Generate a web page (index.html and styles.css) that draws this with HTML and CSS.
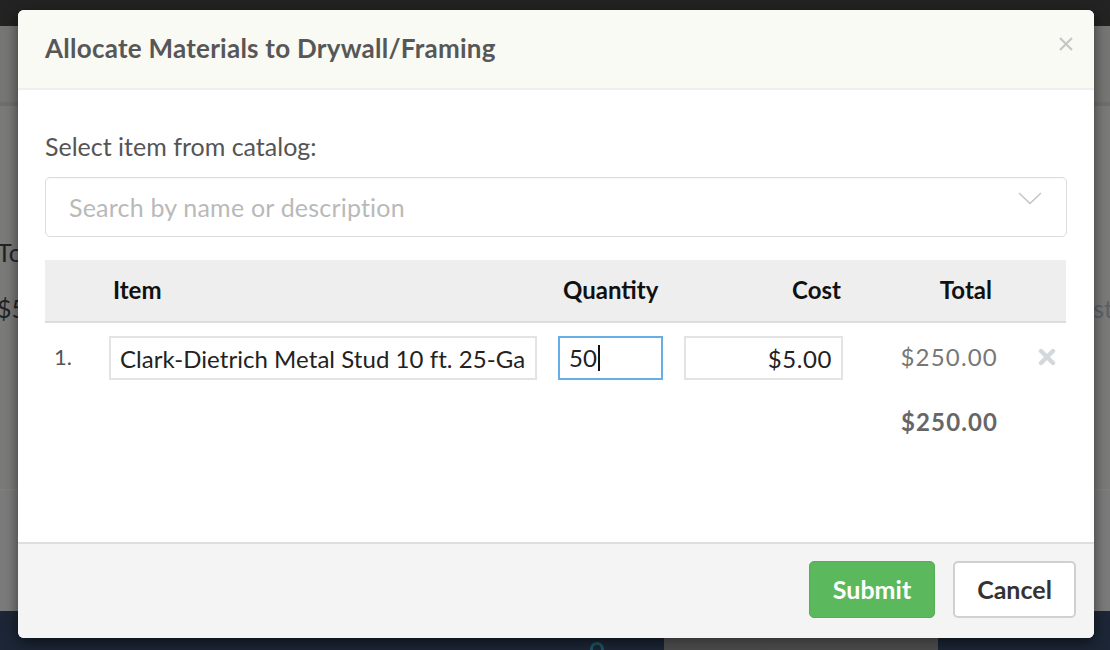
FILE: index.html
```html
<!DOCTYPE html>
<html lang="en">
<head>
<meta charset="utf-8">
<title>Allocate Materials</title>
<link rel="stylesheet" href="styles.css">
</head>
<body>
<div class="page">
  <div class="topbar"></div>
  <div class="backdrop">
    <div class="bg-band"></div>
    <div class="bg-main">
      <div class="bg-left">
        <div class="bg-text">Total</div>
        <div class="bg-text">$50</div>
      </div>
      <div class="bg-right">
        <div class="bg-text bg-muted">Cost</div>
      </div>
    </div>
    <div class="bg-band2"></div>
  </div>
  <div class="bottombar">
    <span class="bg-arc"></span>
    <span class="bg-block"></span>
  </div>
</div>

<div class="modal">
  <div class="modal-header">
    <h2 class="modal-title">Allocate Materials to Drywall/Framing</h2>
    <button class="close" aria-label="Close">
      <svg width="14" height="14" viewBox="0 0 14 14"><path d="M1 1L13 13M13 1L1 13" stroke="#c6c6c6" stroke-width="2.2" fill="none"/></svg>
    </button>
  </div>
  <div class="modal-body">
    <label class="field-label">Select item from catalog:</label>
    <div class="select">
      <span class="placeholder">Search by name or description</span>
      <svg class="chevron" width="24" height="13" viewBox="0 0 24 13"><polyline points="1,1 12,11.5 23,1" stroke="#c4c4c4" stroke-width="1.5" fill="none"/></svg>
    </div>

    <div class="table">
      <div class="trow thead">
        <div class="c-num"></div>
        <div class="c-item">Item</div>
        <div class="c-qty">Quantity</div>
        <div class="c-cost">Cost</div>
        <div class="c-total">Total</div>
        <div class="c-rm"></div>
      </div>
      <div class="trow tbody">
        <div class="c-num num">1.</div>
        <div class="c-item"><input class="inp inp-item" type="text" value="Clark-Dietrich Metal Stud 10 ft. 25-Ga" readonly></div>
        <div class="c-qty"><div class="inp inp-qty">50<span class="caret"></span></div></div>
        <div class="c-cost"><input class="inp inp-cost" type="text" value="$5.00" readonly></div>
        <div class="c-total total-val">$250.00</div>
        <div class="c-rm">
          <svg class="rm" width="18" height="18" viewBox="0 0 18 18"><path d="M3 3L15 15M15 3L3 15" stroke="#d2d8db" stroke-width="4.4" stroke-linecap="round" fill="none"/></svg>
        </div>
      </div>
      <div class="trow tfoot">
        <div class="c-num"></div>
        <div class="c-item"></div>
        <div class="c-qty"></div>
        <div class="c-cost"></div>
        <div class="c-total grand">$250.00</div>
        <div class="c-rm"></div>
      </div>
    </div>
  </div>
  <div class="modal-footer">
    <button class="btn btn-submit">Submit</button>
    <button class="btn btn-cancel">Cancel</button>
  </div>
</div>
</body>
</html>
```
FILE: styles.css
```css
* { box-sizing: border-box; }
html, body {
  margin: 0;
  padding: 0;
  width: 1110px;
  height: 650px;
  overflow: hidden;
}
body {
  font-family: "Lato", "Open Sans", "Liberation Sans", sans-serif;
  position: relative;
  background: #777;
}

/* background page (dimmed) */
.page {
  display: flex;
  flex-direction: column;
  height: 650px;
}
.topbar {
  height: 26px;
  background: #232323;
  flex: none;
}
.backdrop {
  flex: 1;
  display: flex;
  flex-direction: column;
  background: #787876;
}
.bg-band {
  height: 80px;
  background: #767674;
  border-bottom: 4px solid #6f6f6d;
  flex: none;
}
.bg-main {
  flex: 1;
  display: flex;
  justify-content: space-between;
  background: #7a7a78;
  border-bottom: 1px solid #828280;
}
.bg-left {
  padding-top: 133px;
  margin-left: -3px;
  display: flex;
  flex-direction: column;
  gap: 30px;
}
.bg-right {
  padding-top: 189px;
  margin-right: -3px;
}
.bg-text {
  font-size: 25px;
  color: #232323;
  line-height: 26px;
}
.bg-muted { color: #5a6168; }
.bg-band2 {
  height: 121px;
  background: #7b7b7b;
  flex: none;
}
.bottombar {
  height: 39px;
  flex: none;
  background: #1c2636;
  display: flex;
  padding-left: 590px;
  gap: 60px;
  align-items: flex-end;
}
.bg-arc {
  width: 14px;
  height: 14px;
  border: 3px solid #1f5666;
  border-radius: 50%;
  margin-bottom: -6px;
}
.bg-block {
  width: 274px;
  height: 12px;
  background: linear-gradient(#5c5c5c, #4c4c4c);
}

/* modal */
.modal {
  position: absolute;
  left: 18px;
  top: 10px;
  width: 1076px;
  height: 628px;
  background: #fff;
  border-radius: 6px;
  box-shadow: 0 4px 14px rgba(0,0,0,0.55);
  display: flex;
  flex-direction: column;
  overflow: hidden;
}
.modal-header {
  height: 80px;
  flex: none;
  background: #fafaf4;
  border-bottom: 2px solid #efefef;
  display: flex;
  align-items: center;
  justify-content: space-between;
  padding: 0 21px 3px 27px;
}
.modal-title {
  margin: 0;
  font-size: 26px;
  line-height: 30px;
  font-weight: 700;
  color: #575757;
  letter-spacing: 0.25px;
}
.close {
  border: 0;
  background: none;
  padding: 0;
  width: 14px;
  height: 14px;
  display: flex;
  margin-top: -7px;
}

.modal-body {
  flex: 1;
  padding: 42px 27px 0 27px;
  border-bottom: 2px solid #dedede;
}
.field-label {
  display: block;
  font-size: 25px;
  color: #555;
  line-height: 28px;
}
.select {
  margin-top: 17px;
  height: 60px;
  border: 1px solid #dcdcdc;
  border-radius: 5px;
  display: flex;
  align-items: center;
  justify-content: space-between;
  padding: 0 24px 6px 23px;
  box-shadow: inset 0 1px 1px rgba(0,0,0,0.03);
}
.placeholder {
  font-size: 25px;
  line-height: 28px;
  color: #b9b9b9;
  margin-top: 5px;
  letter-spacing: 0.2px;
}
.chevron { margin-top: -12px; }

.table {
  margin-top: 23px;
  width: 1021px;
}
.trow {
  display: grid;
  grid-template-columns: 64px 449px 126px 159px 155px 68px;
  align-items: center;
}
.thead {
  height: 63px;
  background: #eeeeee;
  border-bottom: 2px solid #dddddd;
  font-size: 24px;
  font-weight: 700;
  color: #111;
  padding-bottom: 3px;
}
.thead .c-item { padding-left: 4px; }
.thead .c-qty { padding-left: 5px; }
.thead .c-cost { text-align: right; padding-right: 2px; }
.thead .c-total { text-align: right; padding-right: 6px; }

.tbody {
  padding-top: 13px;
  height: 71px;
  align-items: start;
}
.num {
  padding-left: 9px;
  font-size: 22px;
  color: #555;
  line-height: 42px;
}
.inp {
  display: block;
  height: 44px;
  border: 2px solid #e3e3e3;
  background: #fff;
  font-family: inherit;
  font-size: 24px;
  color: #222;
  padding: 0 9px;
  outline: none;
  margin: 0;
}
.inp-item { width: 428px; letter-spacing: 0.05px; }
.inp-qty {
  width: 105px;
  border-color: #66aee6;
  display: flex;
  align-items: center;
  line-height: 1;
}
.caret {
  display: inline-block;
  width: 2px;
  height: 26px;
  background: #111;
  margin-left: 1px;
}
.inp-cost { width: 159px; text-align: right; letter-spacing: 0.6px; }
.total-val {
  text-align: right;
  font-size: 24px;
  letter-spacing: 1.2px;
  color: #777;
  line-height: 42px;
  padding-right: 0;
}
.c-rm {
  padding-left: 40px;
  display: flex;
  align-items: center;
  height: 42px;
}
.tfoot {
  height: 50px;
  align-items: center;
}
.grand {
  text-align: right;
  font-size: 24px;
  letter-spacing: 1.1px;
  font-weight: 700;
  color: #666;
  padding-right: 0;
  margin-top: 4px;
}

.modal-footer {
  height: 94px;
  flex: none;
  background: #f4f4f4;
  display: flex;
  justify-content: flex-end;
  align-items: center;
  gap: 18px;
  padding: 0 18px 4px 0;
}
.btn {
  height: 57px;
  border-radius: 5px;
  font-family: inherit;
  font-size: 25px;
  font-weight: 700;
  padding: 0;
  cursor: pointer;
}
.btn-submit {
  width: 126px;
  background: #5cb85c;
  border: 1px solid #55ad55;
  color: #fff;
}
.btn-cancel {
  width: 123px;
  background: #fff;
  border: 2px solid #d0d0d0;
  color: #333;
}
```
